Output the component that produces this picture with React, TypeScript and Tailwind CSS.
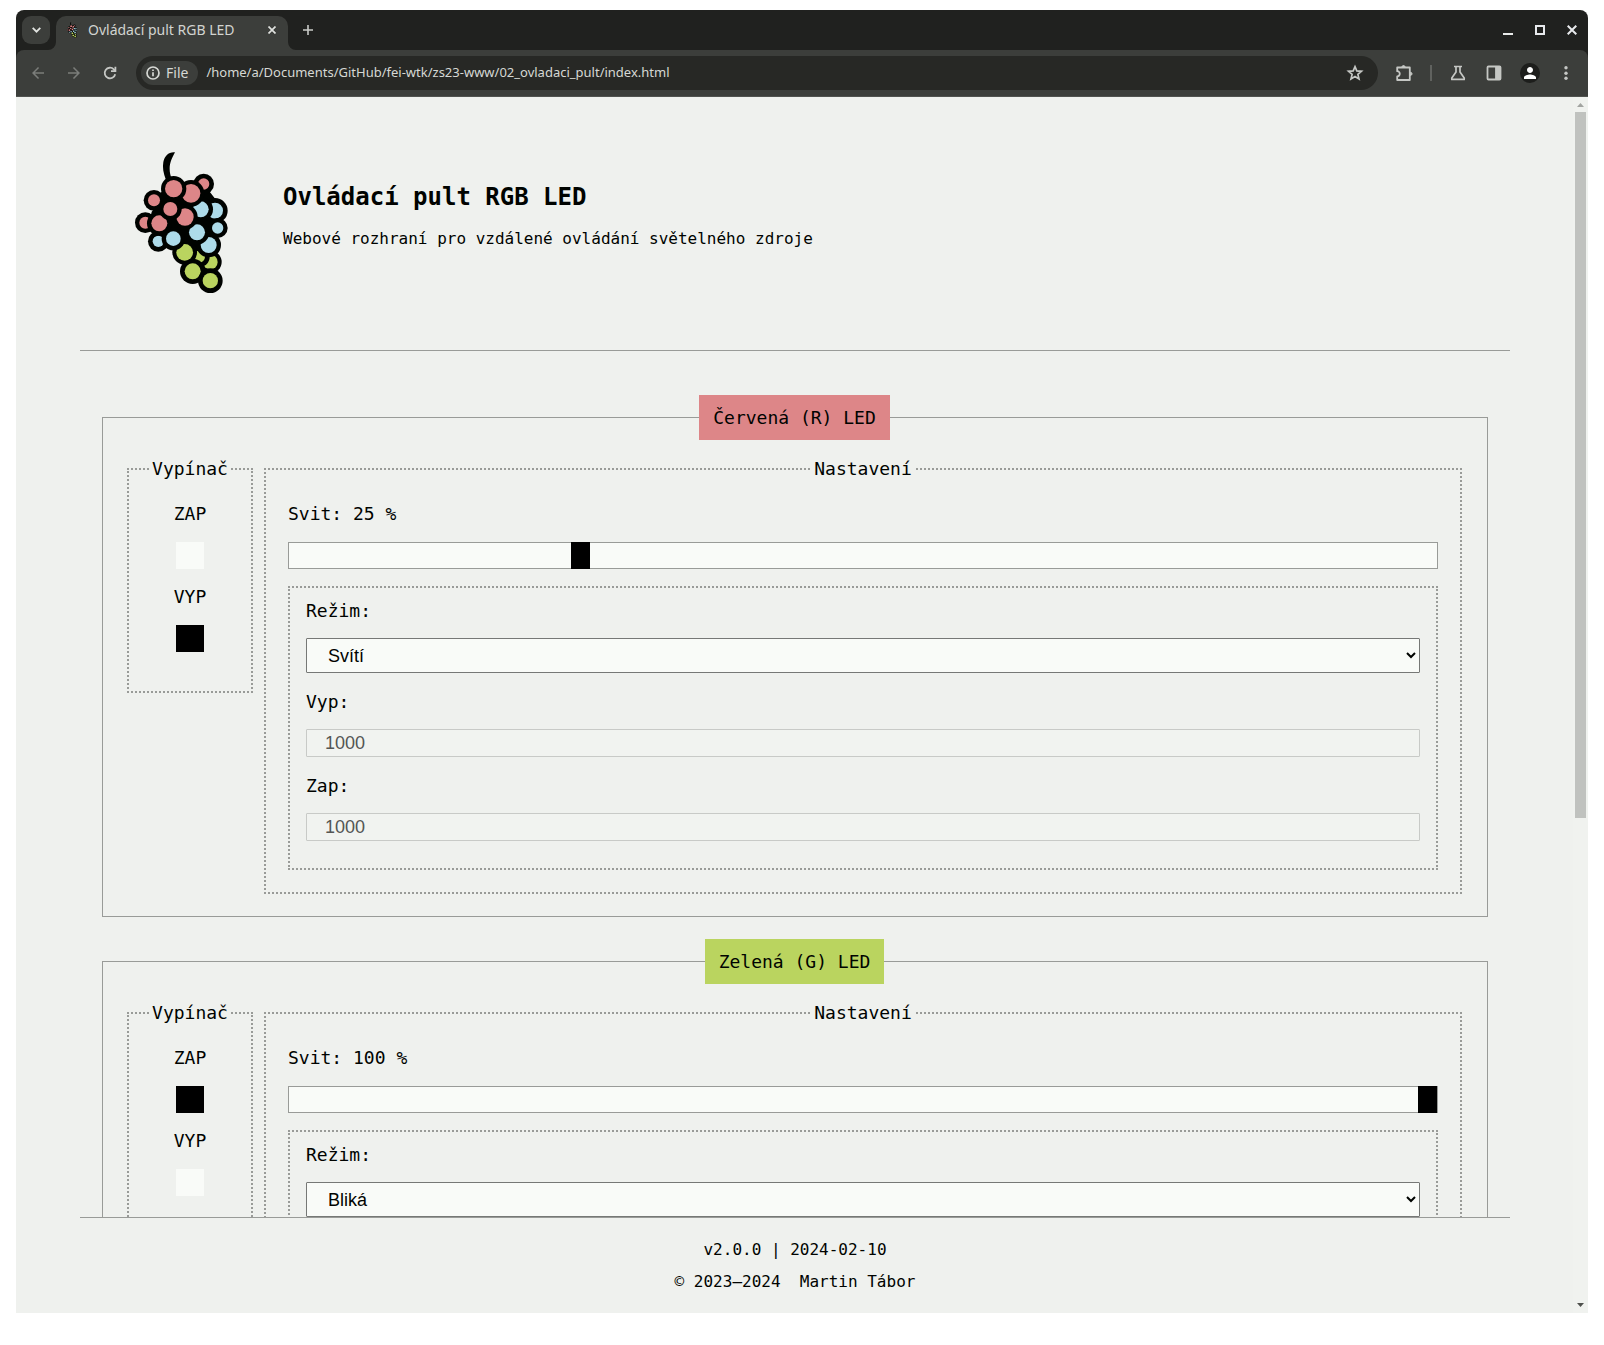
import React, { useState } from "react";
import { MdArrowBack, MdArrowForward, MdPerson } from "react-icons/md";

const RED = "#dd8688";
const BLUE = "#addbe9";
const GREEN = "#bad45f";

// Back to front: centre x, centre y, fill radius, outline radius, colour.
const berries: [number, number, number, number, string][] = [
  [271, 366, 22, 34, GREEN],
  [237, 350, 18, 32, GREEN],
  [218, 394, 24, 38, GREEN],
  [194, 337, 25, 37, GREEN],
  [271, 422, 23, 37, GREEN],
  [266, 315, 24, 37, BLUE],
  [115, 304, 17, 31, BLUE],
  [285, 212, 24, 38, BLUE],
  [293, 264, 17, 30, BLUE],
  [242, 208, 24, 37, BLUE],
  [231, 277, 24, 37, BLUE],
  [160, 296, 22, 35, BLUE],
  [251, 132, 17, 31, RED],
  [213, 160, 28, 40, RED],
  [161, 146, 26, 38, RED],
  [195, 231, 26, 38, RED],
  [76, 248, 18, 31, RED],
  [118, 250, 24, 37, RED],
  [102, 181, 18, 31, RED],
  [151, 207, 21, 34, RED],
];

function GrapeLogo({ className, viewBox }: { className: string; viewBox: string }) {
  return (
    <svg className={className} viewBox={viewBox} aria-hidden="true">
      <path
        d="M165 37C154 58 149 70 149 86C149 98 151 106 156 118L138 120C130 100 127 82 130 66C134 48 146 35 165 37Z"
        fill="#000300"
      />
      <path
        d="M120 160L160 130L215 140L265 150L300 195L305 265L280 310L265 370L200 350L165 310L110 290L90 245L95 215L112 195Z"
        fill="#000300"
      />
      {berries.map(([x, y, r, o, c]) => (
        <g key={`${x}-${y}`}>
          <circle cx={x} cy={y} r={o} fill="#000300" />
          <circle cx={x} cy={y} r={r} fill={c} />
        </g>
      ))}
    </svg>
  );
}

function TabStrip() {
  return (
    <div className="flex h-10 shrink-0 items-end bg-[#20211f] pl-1.5 text-[#d2d4d0]">
      <button
        aria-label="Hledat karty"
        className="mb-1.5 flex size-7 items-center justify-center rounded-[9px] bg-[#3c3e3b]"
      >
        <svg width="9" height="6" viewBox="0 0 9 6" fill="none" stroke="#e2e4e1" strokeWidth="1.8">
          <path d="M0.7 0.9L4.5 4.7L8.3 0.9" />
        </svg>
      </button>
      <div className="relative ml-1.5 flex h-[34px] w-[232px] items-center rounded-t-[10px] bg-[#3c3e3b] pb-1.5 pl-2.5 pr-2">
        <svg className="absolute -left-2 bottom-0 size-2" viewBox="0 0 8 8" fill="#3c3e3b">
          <path d="M8 0V8H0A8 8 0 0 0 8 0Z" />
        </svg>
        <svg className="absolute -right-2 bottom-0 size-2" viewBox="0 0 8 8" fill="#3c3e3b">
          <path d="M0 0V8H8A8 8 0 0 1 0 0Z" />
        </svg>
        <GrapeLogo className="h-4 w-3" viewBox="40 30 290 435" />
        <span className="ml-2.5 flex-1 truncate text-sm">Ovládací pult RGB LED</span>
        <button aria-label="Zavřít kartu" className="flex size-4 items-center justify-center">
          <svg width="8" height="8" viewBox="0 0 8 8" stroke="#dfe1de" strokeWidth="1.7">
            <path d="M0.5 0.5L7.5 7.5M7.5 0.5L0.5 7.5" />
          </svg>
        </button>
      </div>
      <button aria-label="Nová karta" className="mb-1.5 ml-1.5 flex size-7 items-center justify-center">
        <svg width="10" height="10" viewBox="0 0 10 10" stroke="#c9cbc8" strokeWidth="1.6">
          <path d="M5 0V10M0 5H10" />
        </svg>
      </button>
      <div className="mb-1.5 ml-auto flex">
        <button aria-label="Minimalizovat" className="flex h-7 w-8 items-center justify-center">
          <svg width="10" height="10" fill="#e8eae9">
            <rect y="8" width="10" height="2" />
          </svg>
        </button>
        <button aria-label="Maximalizovat" className="flex h-7 w-8 items-center justify-center">
          <svg width="10" height="10" fill="none" stroke="#e8eaed" strokeWidth="2">
            <rect x="1" y="1" width="8" height="8" />
          </svg>
        </button>
        <button aria-label="Zavřít" className="flex h-7 w-8 items-center justify-center">
          <svg width="10" height="10" stroke="#e8eaed" strokeWidth="2">
            <path d="M0.7 0.7L9.3 9.3M9.3 0.7L0.7 9.3" />
          </svg>
        </button>
      </div>
    </div>
  );
}

function Toolbar() {
  const nav = "flex h-9 w-9 items-center justify-center";
  return (
    <div className="bg-[#20211f]">
      <div className="flex h-[47px] items-center rounded-t-lg border-b border-[#50524f] bg-[#3c3e3b] pb-px pl-1 pr-1 text-[#c5c7c4]">
        <button aria-label="Zpět" className={`${nav} text-[#7b7d7a]`}>
          <MdArrowBack size={18} />
        </button>
        <button aria-label="Vpřed" className={`${nav} text-[#7b7d7a]`}>
          <MdArrowForward size={18} />
        </button>
        <button aria-label="Znovu načíst" className={nav}>
          <svg width="14" height="14" viewBox="0 0 14 14" fill="none" stroke="currentColor" strokeWidth="1.8">
            <path d="M12.2 8.2A5.3 5.3 0 1 1 10.8 3.3L12.4 4.9" />
            <path d="M12.4 0.8V5.2H8" />
          </svg>
        </button>
        <div className="ml-2 flex h-[34px] min-w-0 flex-1 items-center rounded-full bg-[#272825] pl-[5px] pr-3.5">
          <span className="flex h-6 items-center gap-1.5 rounded-full bg-[#3c3e3b] pl-[5px] pr-2.5 text-sm text-[#d6d8d4]">
            <svg width="14" height="14" viewBox="0 0 14 14" fill="none" stroke="currentColor" strokeWidth="1.7">
              <circle cx="7" cy="7" r="6" />
              <path d="M7 6.2V10.2M7 3.6V5.1" />
            </svg>
            File
          </span>
          <input
            aria-label="Adresa"
            className="ml-2 min-w-0 flex-1 bg-transparent text-[13px] text-[#d6d8d4] outline-none"
            defaultValue="/home/a/Documents/GitHub/fei-wtk/zs23-www/02_ovladaci_pult/index.html"
          />
          <button aria-label="Přidat záložku">
            <svg width="18" height="18" viewBox="0 0 18 18" fill="none" stroke="currentColor" strokeWidth="1.7">
              <path d="M9 2.6L10.8 6.9L15.5 7.3L11.9 10.4L13 15L9 12.5L5 15L6.1 10.4L2.5 7.3L7.2 6.9Z" />
            </svg>
          </button>
        </div>
        <button aria-label="Rozšíření" className="ml-2 flex h-9 w-9 items-center justify-center">
          <svg width="18" height="18" viewBox="0 0 18 18" fill="none" stroke="currentColor" strokeWidth="1.8" strokeLinejoin="round">
            <path d="M2.2 3.5H14.8V16H2.2V12.4C5.6 12.4 5.6 7.2 2.2 7.2Z" />
            <path d="M6.9 3.2C6.9 1 10.1 1 10.1 3.2ZM15.3 8.2C17.6 8.2 17.6 11.4 15.3 11.4Z" fill="currentColor" strokeWidth="1" />
          </svg>
        </button>
        <span className="mx-2 h-4 w-0.5 bg-[#60625f]" />
        <button aria-label="Experimenty" className="flex h-9 w-9 items-center justify-center">
          <svg width="16" height="16" viewBox="0 0 16 16" fill="none" stroke="currentColor" strokeWidth="1.7" strokeLinejoin="round">
            <path d="M4 1.5H12M6 1.5V7L1.8 13V14.4H14.2V13L10 7V1.5" />
          </svg>
        </button>
        <button aria-label="Postranní panel" className="flex h-9 w-9 items-center justify-center">
          <svg width="16" height="16" viewBox="0 0 16 16" fill="none" stroke="currentColor" strokeWidth="1.8">
            <rect x="1.5" y="1.5" width="13" height="13" rx="1" />
            <rect x="10" y="2" width="4" height="12" fill="currentColor" />
          </svg>
        </button>
        <button aria-label="Profil" className="flex h-9 w-9 items-center justify-center">
          <span className="flex size-5 items-center justify-center rounded-full bg-[#1d1e1c] text-white">
            <MdPerson size={18} />
          </span>
        </button>
        <button aria-label="Nabídka" className="flex h-9 w-9 items-center justify-center">
          <svg width="4" height="14" fill="currentColor">
            <circle cx="2" cy="1.8" r="1.7" />
            <circle cx="2" cy="7.2" r="1.7" />
            <circle cx="2" cy="12.3" r="1.7" />
          </svg>
        </button>
      </div>
    </div>
  );
}

function SwitchOption({ name, label, checked, onChange }: {
  name: string;
  label: string;
  checked: boolean;
  onChange: () => void;
}) {
  return (
    <label className="flex flex-col items-center gap-4">
      {label}
      <input
        type="radio"
        name={name}
        checked={checked}
        onChange={onChange}
        className="h-[27px] w-7 appearance-none bg-[#f9fbf8] checked:bg-black"
      />
    </label>
  );
}

function LedPanel({ id, title, badge, initialOn, initialLevel, initialMode }: {
  id: string;
  title: string;
  badge: string;
  initialOn: boolean;
  initialLevel: number;
  initialMode: string;
}) {
  const [on, setOn] = useState(initialOn);
  const [level, setLevel] = useState(initialLevel);
  const [mode, setMode] = useState(initialMode);
  const locked = mode === "Svítí";
  const numberField =
    "mt-[15px] h-7 w-full rounded-[1px] border border-[#767876] bg-[#f9fbf8] pl-[18px] font-['Liberation_Sans',sans-serif] text-lg disabled:border-[#c8cac7] disabled:bg-[#f1f3f0] disabled:text-[#545654]";

  return (
    <fieldset className="min-w-0 border border-[#999b98] pb-[22px] pl-6 pr-[25px]">
      <legend className={`mx-auto flex h-[45px] items-center px-3.5 ${badge}`}>{title}</legend>
      <div className="mt-[17px] grid grid-cols-[126px_1fr] items-start gap-[11px]">
        <fieldset className="border-2 border-dotted border-[#999b98] pb-[39px] pt-[21px]">
          <legend className="mx-auto px-0.5">Vypínač</legend>
          <div className="flex flex-col gap-4">
            <SwitchOption name={`${id}-switch`} label="ZAP" checked={on} onChange={() => setOn(true)} />
            <SwitchOption name={`${id}-switch`} label="VYP" checked={!on} onChange={() => setOn(false)} />
          </div>
        </fieldset>
        <fieldset className="min-w-0 border-2 border-dotted border-[#999b98] px-[22px] pb-[22px] pt-[21px]">
          <legend className="mx-auto px-0.5">Nastavení</legend>
          <label htmlFor={`${id}-level`} className="block">
            Svit: {level} %
          </label>
          <input
            id={`${id}-level`}
            type="range"
            min={0}
            max={100}
            value={level}
            onChange={(e) => setLevel(Number(e.target.value))}
            className="mt-4 block h-[27px] w-full appearance-none border border-[#999b98] bg-[#f9fbf8] [&::-webkit-slider-thumb]:h-[27px] [&::-webkit-slider-thumb]:w-[19px] [&::-webkit-slider-thumb]:appearance-none [&::-webkit-slider-thumb]:bg-black"
          />
          <div className="mt-[17px] border-2 border-dotted border-[#999b98] px-4 pb-[27px] pt-[11px]">
            <label htmlFor={`${id}-mode`} className="block">Režim:</label>
            <select
              id={`${id}-mode`}
              value={mode}
              onChange={(e) => setMode(e.target.value)}
              className="mt-[15px] block h-[35px] w-full rounded-[1px] border border-[#767876] bg-[#f9fbf8] pl-[17px] font-['Liberation_Sans',sans-serif] text-lg"
            >
              <option>Svítí</option>
              <option>Bliká</option>
            </select>
            <label htmlFor={`${id}-off`} className="mt-[17px] block">Vyp:</label>
            <input id={`${id}-off`} defaultValue="1000" disabled={locked} className={numberField} />
            <label htmlFor={`${id}-on`} className="mt-[17px] block">Zap:</label>
            <input id={`${id}-on`} defaultValue="1000" disabled={locked} className={numberField} />
          </div>
        </fieldset>
      </div>
    </fieldset>
  );
}

function PageScrollbar() {
  return (
    <div className="flex w-[15px] shrink-0 flex-col items-center bg-[#f0f2ef] py-1.5" aria-hidden="true">
      <svg width="7" height="4" viewBox="0 0 7 4" fill="#a2a4a1">
        <path d="M0 4L3.5 0L7 4Z" />
      </svg>
      <div className="my-[5px] flex w-full flex-1 justify-center">
        <div className="h-[59.5%] w-[11px] bg-[#c0c2bf]" />
      </div>
      <svg width="7" height="4" viewBox="0 0 7 4" fill="#4e504d">
        <path d="M0 0H7L3.5 4Z" />
      </svg>
    </div>
  );
}

export default function App() {
  return (
    <div className="h-screen overflow-hidden bg-white px-4 pb-8 pt-2.5">
      <div className="flex h-full flex-col overflow-hidden rounded-t-lg font-['Noto_Sans',sans-serif]">
        <TabStrip />
        <Toolbar />
        <div className="flex min-h-0 flex-1 bg-[#eff1ee] font-['DejaVu_Sans_Mono',monospace] text-[#000300]">
          <div className="flex min-w-0 flex-1 flex-col pl-16 pr-[63px]">
            <main className="min-h-0 flex-1 overflow-y-auto [scrollbar-width:none]">
              <header className="flex border-b border-[#999b98] pb-[45px] pl-10 pt-[43px]">
                <GrapeLogo className="h-[165px] w-[130px] shrink-0" viewBox="0 0 390 495" />
                <div className="ml-[33px] pt-[41px]">
                  <h1 className="text-2xl font-bold">Ovládací pult RGB LED</h1>
                  <p className="mt-3.5">Webové rozhraní pro vzdálené ovládání světelného zdroje</p>
                </div>
              </header>
              <form className="mt-11 flex flex-col gap-[22px] px-[22px] text-lg leading-6">
                <LedPanel id="red" title="Červená (R) LED" badge="bg-[#dd8688]" initialOn={false} initialLevel={25} initialMode="Svítí" />
                <LedPanel id="green" title="Zelená (G) LED" badge="bg-[#bad45f]" initialOn initialLevel={100} initialMode="Bliká" />
              </form>
            </main>
            <footer className="flex h-24 shrink-0 flex-col items-center gap-2 border-t border-[#999b98] pt-5">
              <p>v2.0.0 | 2024-02-10</p>
              <p className="whitespace-pre">© 2023–2024  Martin Tábor</p>
            </footer>
          </div>
          <PageScrollbar />
        </div>
      </div>
    </div>
  );
}
